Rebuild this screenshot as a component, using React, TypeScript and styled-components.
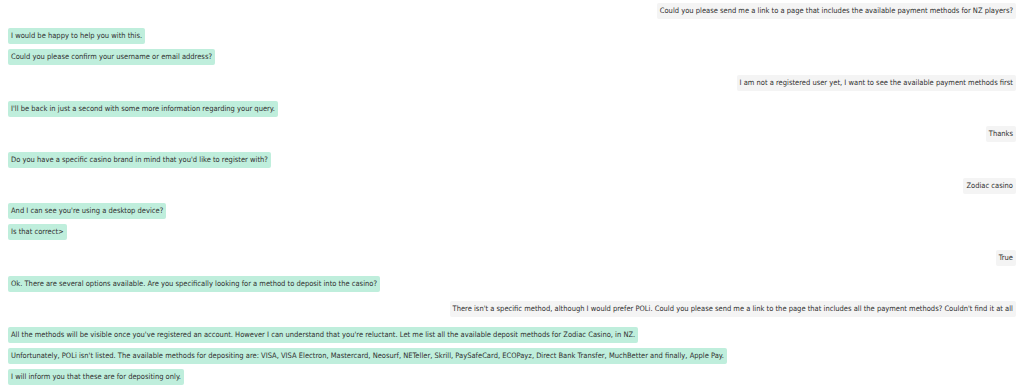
import React from 'react';
import styled, { createGlobalStyle } from 'styled-components';

const GlobalStyle = createGlobalStyle`
  html, body {
    margin: 0;
    padding: 0;
    background: #ffffff;
  }
  body {
    font-family: "DejaVu Sans Condensed", "DejaVu Sans", sans-serif;
  }
`;

const Transcript = styled.div`
  display: flex;
  flex-direction: column;
  gap: 9.7px;
  padding: 2.5px 8px 0 8px;
  width: 1024px;
  box-sizing: border-box;
`;

const Group = styled.div<{ $side: 'agent' | 'visitor' }>`
  display: flex;
  flex-direction: column;
  align-items: ${(p) => (p.$side === 'agent' ? 'flex-start' : 'flex-end')};
  gap: 5px;
`;

const Bubble = styled.div<{ $side: 'agent' | 'visitor' }>`
  background: ${(p) => (p.$side === 'agent' ? '#bfeedc' : '#f4f4f4')};
  color: #303030;
  font-size: 7.5px;
  line-height: 12px;
  padding: 2px 3px;
  border-radius: 2px;
  white-space: nowrap;
`;

type Side = 'agent' | 'visitor';

const conversation: { side: Side; lines: string[] }[] = [
  {
    side: 'visitor',
    lines: ['Could you please send me a link to a page that includes the available payment methods for NZ players?'],
  },
  {
    side: 'agent',
    lines: ['I would be happy to help you with this.', 'Could you please confirm your username or email address?'],
  },
  {
    side: 'visitor',
    lines: ['I am not a registered user yet, I want to see the available payment methods first'],
  },
  {
    side: 'agent',
    lines: ["I'll be back in just a second with some more information regarding your query."],
  },
  { side: 'visitor', lines: ['Thanks'] },
  {
    side: 'agent',
    lines: ["Do you have a specific casino brand in mind that you'd like to register with?"],
  },
  { side: 'visitor', lines: ['Zodiac casino'] },
  {
    side: 'agent',
    lines: ["And I can see you're using a desktop device?", 'Is that correct>'],
  },
  { side: 'visitor', lines: ['True'] },
  {
    side: 'agent',
    lines: ['Ok. There are several options available. Are you specifically looking for a method to deposit into the casino?'],
  },
  {
    side: 'visitor',
    lines: [
      "There isn't a specific method, although I would prefer POLi. Could you please send me a link to the page that includes all the payment methods? Couldn't find it at all",
    ],
  },
  {
    side: 'agent',
    lines: [
      "All the methods will be visible once you've registered an account. However I can understand that you're reluctant. Let me list all the available deposit methods for Zodiac Casino, in NZ.",
      "Unfortunately, POLi isn't listed. The available methods for depositing are: VISA, VISA Electron, Mastercard, Neosurf, NETeller, Skrill, PaySafeCard, ECOPayz, Direct Bank Transfer, MuchBetter and finally, Apple Pay.",
      'I will inform you that these are for depositing only.',
    ],
  },
];

export default function App() {
  return (
    <>
      <GlobalStyle />
      <Transcript>
        {conversation.map((group, i) => (
          <Group key={i} $side={group.side}>
            {group.lines.map((line, j) => (
              <Bubble key={j} $side={group.side}>
                {line}
              </Bubble>
            ))}
          </Group>
        ))}
      </Transcript>
    </>
  );
}
